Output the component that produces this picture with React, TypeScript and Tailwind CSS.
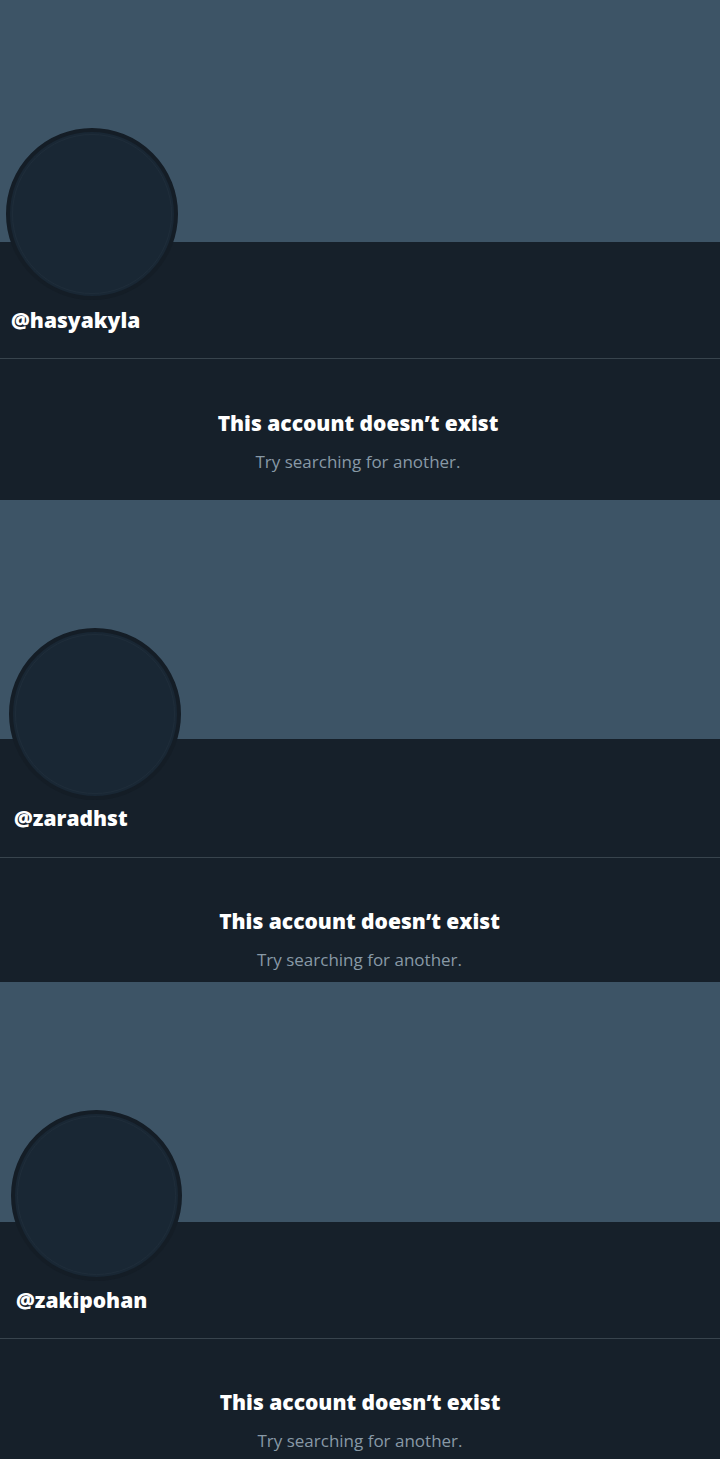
const panels = [
  {
    handle: "@hasyakyla",
    banner: "h-[242px]",
    avatar: "ml-[6px] -mt-[114px] w-[172px] h-[172px]",
    name: "ml-[11px] mt-[6px]",
    divider: "mt-[24px]",
    heading: "mt-[50px] pr-[4px]",
    bottom: "pb-[27px]",
  },
  {
    handle: "@zaradhst",
    banner: "h-[239px]",
    avatar: "ml-[9px] -mt-[111px] w-[172px] h-[172px]",
    name: "ml-[14px] mt-[4px]",
    divider: "mt-[25px]",
    heading: "mt-[49px] pr-[1px]",
    bottom: "pb-[11px]",
  },
  {
    handle: "@zakipohan",
    banner: "h-[240px]",
    avatar: "ml-[11px] -mt-[112px] w-[171px] h-[171px]",
    name: "ml-[16px] mt-[5px]",
    divider: "mt-[24px]",
    heading: "mt-[49px]",
    bottom: "pb-[10px]",
  },
];

const Panel = ({ p }: { p: (typeof panels)[number] }) => (
  <section className="flex flex-col bg-[#16202a]">
    <div className={`${p.banner} bg-[#3d5466]`} />
    {/* Avatar overlapping banner */}
    <div className={`${p.avatar} rounded-full border-[4px] border-[#141d26] bg-[#192734] p-[2px]`}>
      <div className="h-full w-full rounded-full border border-[#1f2d3a]" />
    </div>
    <div className={`${p.name} h-[28px] text-[21px] leading-[28px] font-extrabold text-white`}>{p.handle}</div>
    <div className={`${p.divider} h-px bg-[#38444d]`} />
    <div className={`${p.heading} ${p.bottom} flex flex-col items-center`}>
      <h2 className="h-[28px] text-[21px] leading-[28px] font-extrabold text-white">This account doesn’t exist</h2>
      <p className="mt-[14px] h-[22px] text-[17px] leading-[22px] text-[#8899a6]">Try searching for another.</p>
    </div>
  </section>
);

export default function App() {
  return (
    <div className="min-h-[1459px] bg-[#16202a] font-['Open_Sans',sans-serif]">
      {panels.map((p) => (
        <Panel key={p.handle} p={p} />
      ))}
    </div>
  );
}
